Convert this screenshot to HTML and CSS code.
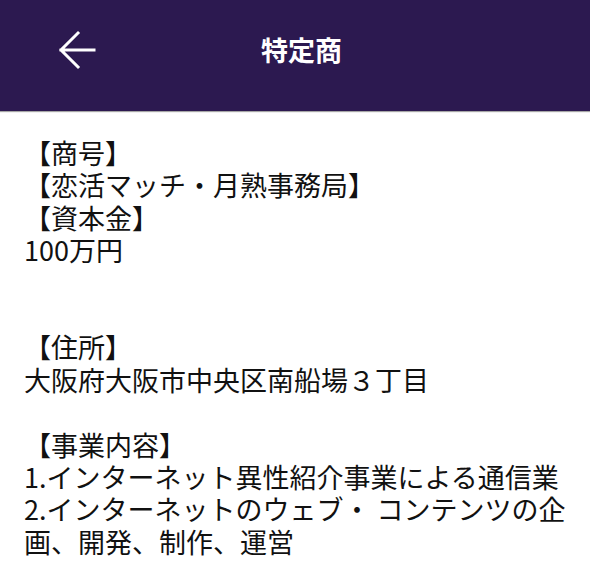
FILE: index.html
```html
<!DOCTYPE html>
<html lang="ja">
<head>
    <meta charset="UTF-8">
    <meta name="viewport" content="width=device-width, initial-scale=1.0">
    <title>特定商</title>
    <link rel="stylesheet" href="styles.css">
</head>
<body>
    <!-- ヘッダー -->
    <header class="toolbar">
        <button class="back-btn" aria-label="戻る">
            <svg width="40" height="40" viewBox="0 0 40 40">
                <path d="M37 20H4M21 3L4 20l17 17" fill="none" stroke="#fff" stroke-width="3" stroke-linecap="square"/>
            </svg>
        </button>
        <h1 class="toolbar-title">特定商</h1>
    </header>

    <!-- 本文 -->
    <main class="content">
        <p class="info">【商号】<br>【恋活マッチ・月熟事務局】<br>【資本金】<br>100万円<br><br><br>【住所】<br>大阪府大阪市中央区南船場３丁目<br><br>【事業内容】<br>1.インターネット異性紹介事業による通信業<br>2.インターネットのウェブ・ コンテンツの企画、開発、制作、運営</p>
    </main>
</body>
</html>
```

FILE: styles.css
```css
body {
    margin: 0;
    font-family: "Noto Sans CJK JP", "Noto Sans", sans-serif;
    background-color: #fff;
    color: #111;
}
.toolbar {
    height: 111px;
    background-color: #2c1950;
    display: flex;
    align-items: center;
    box-shadow: 0 1px 1px rgba(0, 0, 0, 0.35);
}
.back-btn {
    width: 40px;
    height: 40px;
    margin: 0 0 12px 57px;
    padding: 0;
    border: none;
    background: none;
    cursor: pointer;
}
.back-btn svg {
    display: block;
}
.toolbar-title {
    margin: 0 0 12px 164px;
    font-size: 27px;
    font-weight: bold;
    color: #fff;
}
.content {
    padding: 26px 24px;
}
.info {
    margin: 0;
    font-size: 27px;
    line-height: 1.2;
}
```
